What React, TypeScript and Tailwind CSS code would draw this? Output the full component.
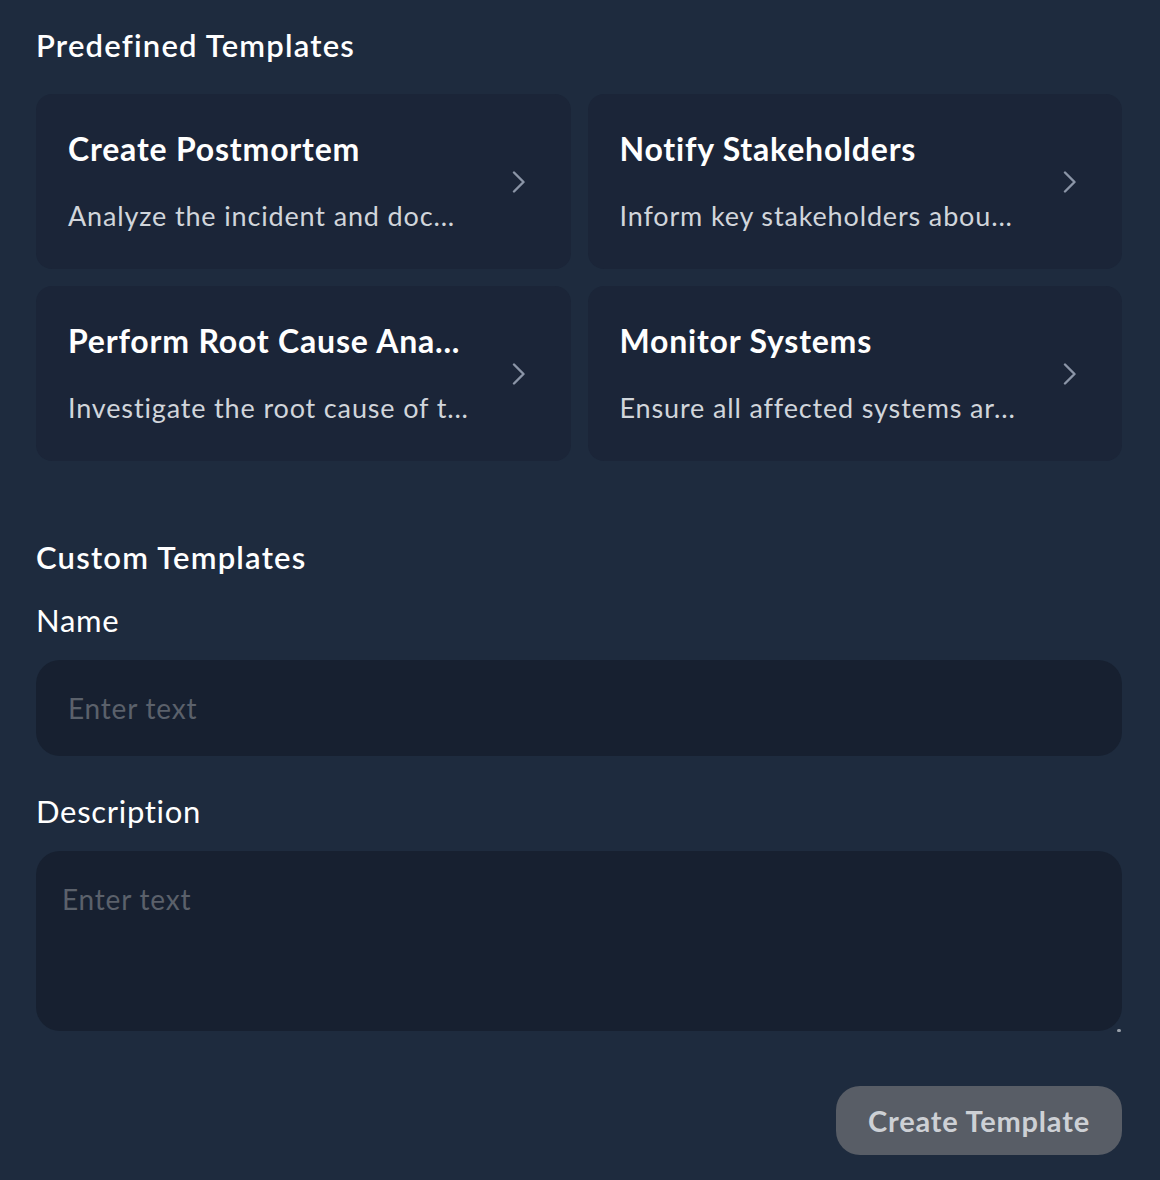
import React from "react";

const cards = [
  { title: "Create Postmortem", desc: "Analyze the incident and doc..." },
  { title: "Notify Stakeholders", desc: "Inform key stakeholders abou..." },
  { title: "Perform Root Cause Ana...", desc: "Investigate the root cause of t..." },
  { title: "Monitor Systems", desc: "Ensure all affected systems ar..." },
];

function Chevron() {
  return (
    <svg width="14" height="22" viewBox="0 0 14 22" fill="none" className="shrink-0">
      <path d="M2 1.5 L11.5 11 L2 20.5" stroke="#8b95a7" strokeWidth="2.4" strokeLinecap="round" strokeLinejoin="round" />
    </svg>
  );
}

export default function App() {
  return (
    <div
      className="min-h-[1180px] w-full bg-[#1e2b3e] text-white px-[36px] pt-[27px]"
      style={{ fontFamily: "Lato, 'Noto Sans', sans-serif" }}
    >
      <h2 className="text-[31px] leading-[36px] font-semibold tracking-[1.2px]">Predefined Templates</h2>
      <div className="grid grid-cols-2 gap-x-[17px] gap-y-[17px] mt-[31px] w-[1086px]">
        {cards.map((c) => (
          <div
            key={c.title}
            className="h-[175px] rounded-[16px] bg-[#1b2538] pl-[32px] pr-[45px] flex items-center justify-between"
          >
            <div className="min-w-0 flex flex-col w-[420px] pb-[1px]">
              <div className="text-[32px] leading-[36px] font-bold tracking-[0.8px] whitespace-nowrap">{c.title}</div>
              <div className="mt-[34px] text-[27px] leading-[30px] text-[#d1d5db] tracking-[0.85px] whitespace-nowrap">{c.desc}</div>
            </div>
            <Chevron />
          </div>
        ))}
      </div>

      <h2 className="mt-[78px] text-[31px] leading-[36px] font-semibold tracking-[1.2px]">Custom Templates</h2>
      <div className="mt-[27px] text-[31px] leading-[36px] tracking-[0.7px]">Name</div>
      <input
        placeholder="Enter text"
        className="mt-[22px] block w-[1086px] h-[96px] rounded-[24px] bg-[#172030] px-[32px] text-[28px] tracking-[0.8px] text-white placeholder:text-[#5b616b] outline-none"
        style={{ fontFamily: "Lato, 'Noto Sans', sans-serif" }}
      />
      <div className="mt-[37px] text-[31px] leading-[36px] tracking-[0.7px]">Description</div>
      <div className="relative mt-[22px] w-[1086px]">
        <textarea
          placeholder="Enter text"
          className="block w-[1086px] h-[180px] rounded-[24px] bg-[#172030] px-[26px] py-[27px] text-[28px] tracking-[0.8px] text-white placeholder:text-[#5b616b] outline-none resize-none"
          style={{ fontFamily: "Lato, 'Noto Sans', sans-serif" }}
        />
        <div className="absolute right-[1px] bottom-[-1px] w-[4px] h-[3px] rounded-full bg-[#9aa1ab]" />
      </div>
      <div className="w-[1086px] flex justify-end mt-[55px]">
        <button className="h-[69px] w-[286px] rounded-[24px] bg-[#585d66] text-[#cdd0d5] text-[29px] font-bold tracking-[0.8px]">
          Create Template
        </button>
      </div>
    </div>
  );
}
